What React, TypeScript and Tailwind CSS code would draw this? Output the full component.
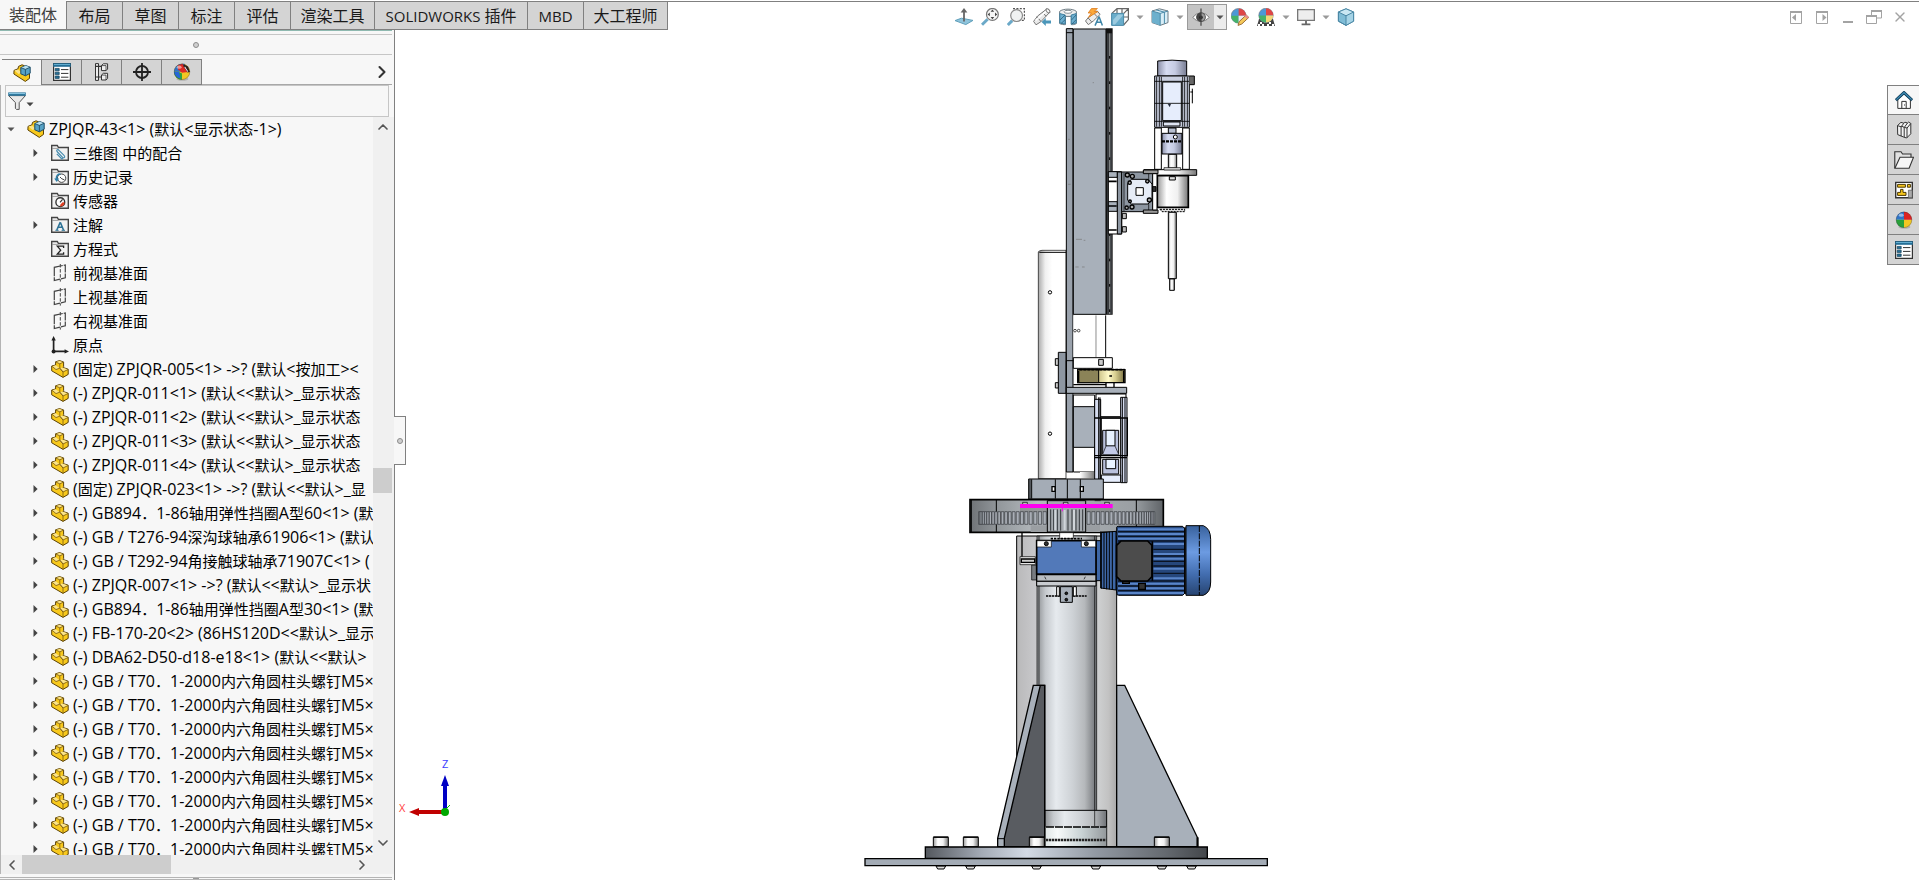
import type { ReactNode } from "react";
import { ChevronDown, ChevronLeft, ChevronRight, ChevronUp, X } from "lucide-react";

/* ---------- shared text helper: Latin runs are set slightly larger than Han runs ---------- */

function MixedText({ text, latin }: { text: string; latin: string }) {
  return (
    <>
      {text.split(/([\u3000-\u9fff\uff00-\uffef]+)/).map((run, i) =>
        i % 2 === 0 && run ? (
          <span key={i} className={latin}>
            {run}
          </span>
        ) : (
          run
        ),
      )}
    </>
  );
}

/* ---------- icons ---------- */

function Icon({ size = 18, children }: { size?: number; children: ReactNode }) {
  return (
    <svg width={size} height={size} viewBox="0 0 18 18" fill="none" className="shrink-0" aria-hidden="true">
      {children}
    </svg>
  );
}

function PartIcon() {
  return (
    <Icon>
      <path d="M4.6 1.8 8.6.6l4 1.4v4.6l-.8.8 5.4 1.8v5.2l-5.2 3L.7 10.8V6L4.6 5z" fill="#f8c91c" stroke="#5c4308" strokeLinejoin="round" />
      <path d="m4.8 2.1 4 1.6 3.6-1.5L8.6.9zM1 6.3 4.8 5.3l3.7 2.9-3.6 1.3zM8.2 8.6l3.2-1 5.4 1.8-4.8 2.4z" fill="#fbe48a" />
      <path d="M8.8 3.8v4.4l3.2 3.8v5.2M4.7 2l4.1 1.8 3.8-1.7M8.8 8.2 12 12l5-2.5M1 6.2l4 3.4 3.6-1.4" stroke="#7a5a10" strokeWidth=".8" />
    </Icon>
  );
}

function AssemblyIcon() {
  return (
    <Icon>
      <path d="M1 6.4 5 4.8 5.5 2.4 9 .8l2.5 1v6l5 2v4.6l-4.2 3L.9 10z" fill="#f8c91c" stroke="#5c4308" strokeLinejoin="round" />
      <path d="M1.5 6.6 5 5.6l4 3-3.4 1.4z" fill="#fbe48a" />
      <path d="m7.8 3.6 5-2 4.4 1.6v6l-4.8 2.6-4.6-2z" fill="#58a3c6" stroke="#1f4e68" strokeLinejoin="round" />
      <path d="m8 3.7 4.8-1.9 4.2 1.5-4.6 2z" fill="#b9e0f0" />
      <path d="m7.8 3.6 4.6 1.8 4.8-2.2m-4.8 2.2v6.2" stroke="#1f4e68" strokeWidth=".9" />
    </Icon>
  );
}

function FolderIcon({ children }: { children: ReactNode }) {
  return (
    <Icon>
      <path d="M.7 16.3V1.5h5.6l1.2 2h9.8v12.8z" fill="#f1f1f1" stroke="#444" strokeWidth="1.4" />
      <path d="M1 4.4h6.4" stroke="#888" strokeWidth=".8" />
      {children}
    </Icon>
  );
}

const icons = {
  assembly: <AssemblyIcon />,
  part: <PartIcon />,
  mates: (
    <FolderIcon>
      <path d="m6 7.5 5.6 5.8M8 6.3l5.5 5.6M5.8 9.8l4.6 4.7M6 7.5c-1-1.6 1-2.5 2-1.2m3.6 7c1 1.2-.4 2-1.2 1.2m3.1-2.6c.7 1.3-.4 2.2-1.4 1.8" stroke="#4189ad" strokeWidth="1.1" />
    </FolderIcon>
  ),
  history: (
    <FolderIcon>
      <circle cx="10.6" cy="10.2" r="4.2" stroke="#444" fill="#fff" />
      <path d="m9 9 1.8 1.8 2.6 1" stroke="#444" />
      <path d="M3.2 10.5h5L5.7 14z" fill="#2f7fa8" />
      <path d="M5.4 11c0-3 1.6-5 4-5" stroke="#2f7fa8" strokeWidth="1.7" />
    </FolderIcon>
  ),
  sensors: (
    <FolderIcon>
      <circle cx="9.3" cy="10.2" r="4.4" stroke="#333" strokeWidth="1.4" fill="#fff" />
      <path d="m9 10.4 2.6-3" stroke="#333" strokeWidth="1.2" />
      <path d="M9.2 14.5a4.4 4.4 0 0 0 4.4-4l-2-.2-2.4 2.4z" fill="#e23f22" />
    </FolderIcon>
  ),
  notes: (
    <FolderIcon>
      <path d="M9.3 6.2 5.8 14M9.3 6.2l3.2 7.8M7 11.3h4.2" stroke="#2e7396" strokeWidth="1.6" />
      <path d="M4.4 14.3h3.2M10.6 14.3H14" stroke="#2e7396" />
    </FolderIcon>
  ),
  equations: (
    <FolderIcon>
      <path d="M12.6 8V6.2H6.3l3.4 4-3.4 4h6.3v-2" stroke="#222" strokeWidth="1.3" />
    </FolderIcon>
  ),
  plane: (
    <Icon>
      <path d="M3.3 3.3v13.2l11-2.6V1z" stroke="#444" strokeWidth="1.2" strokeDasharray="9 1" />
      <path d="M9.3 0v17.6" stroke="#444" strokeDasharray="3.5 1.6" />
    </Icon>
  ),
  origin: (
    <Icon>
      <path d="M2.6 3v12.4H15" stroke="#222" strokeWidth="1.7" />
      <path d="M2.6 0 .4 4.6h4.4zM18 15.4l-4.4-2.2v4.4z" fill="#222" />
      <circle cx="2.6" cy="15.4" r="2" fill="#222" />
    </Icon>
  ),
};

type IconName = keyof typeof icons;

function PropertiesIcon() {
  return (
    <Icon>
      <path d="M.6.6h16.8v16.8H.6z" fill="#fff" stroke="#333" strokeWidth="1.2" />
      <path d="M.2.2h17.6v3.6H.2z" fill="#256f96" />
      <path d="M1 1h16v1H1z" fill="#63add0" />
      <path d="M2.2 5.4h4v2.4h-4zM2.2 9.2h4v2.4h-4zM2.2 13h4v2.4h-4z" fill="#256f96" stroke="#123f58" strokeWidth=".7" />
      <path d="M8 6.6h7.4M8 10.4h7.4M8 14.2h7.4" stroke="#333" />
    </Icon>
  );
}

function ConfigIcon() {
  return (
    <Icon>
      <path d="M2.5.6h3v16.8h-3z" fill="#eee" stroke="#333" />
      <path d="M2.5 3.4h6M2.5 14h6" stroke="#333" strokeWidth="1.1" />
      <path d="M8.5 2.5 10.4.8h4.2v5.2L13 7.6H8.5z" fill="#eee" stroke="#333" />
      <path d="m8.5 12 1.9-1.7h4.2v5.2L13 17H8.5z" fill="#eee" stroke="#333" />
      <path d="M8.5 2.6H13v5M8.5 12.1H13V17" stroke="#333" strokeWidth=".8" />
    </Icon>
  );
}

function TargetIcon() {
  return (
    <Icon>
      <circle cx="9" cy="9" r="6" stroke="#222" strokeWidth="1.8" />
      <path d="M9 0v18M0 9h18" stroke="#222" strokeWidth="1.8" />
    </Icon>
  );
}

function BallIcon({ marked = false }: { marked?: boolean }) {
  return (
    <Icon>
      <ellipse cx="9.4" cy="16" rx="6" ry="1.8" fill="#8f8f8f" opacity=".5" />
      {marked ? (
        <>
          <circle cx="9" cy="8.8" r="8" fill="#f2c722" />
          <path d="M1 8.8A8 8 0 0 1 9 .8h2.6l-2 8H1z" fill="#3074c8" />
          <path d="M1 8.8h4.4L9 10.4v6.3A8 8 0 0 1 1 8.8z" fill="#2fa53b" />
          <path d="M1 8.8h5l1.6 6.8A8 8 0 0 1 1 8.8z" fill="#2766d8" />
          <path d="M4.6 2.2 9.4.8l7.4 8-7.8 1L5 6.4z" fill="#dd2b24" />
          <path d="m10.8 1.2 4.2 2.4 2 5.4-2.4.4L10.2 3z" fill="#2a2020" />
          <path d="m12 3.6 3.2 4.8-.8.4-3-4.6z" fill="#fff" />
        </>
      ) : (
        <>
          <path d="M9 .8a8 8 0 0 0-8 8h8z" fill="#3074c8" />
          <path d="M1 8.8a8 8 0 0 0 8 8v-8z" fill="#28a03a" />
          <path d="M9 16.8a8 8 0 0 0 8-8H9z" fill="#f2c722" />
          <path d="M9 .8a8 8 0 0 1 8 8H9z" fill="#dc2222" />
        </>
      )}
      <circle cx="9" cy="8.8" r="7.8" stroke="#333" strokeOpacity=".4" strokeWidth=".8" />
      <ellipse cx="6.2" cy="4.2" rx="2.4" ry="1.6" fill="#fff" opacity=".5" />
    </Icon>
  );
}

function Caret({ className = "" }: { className?: string }) {
  return (
    <svg width="8" height="5" viewBox="0 0 8 5" className={`shrink-0 ${className}`} aria-hidden="true">
      <path d="M.5.5h7L4 4.2z" fill="currentColor" />
    </svg>
  );
}

/* ---------- command tabs ---------- */

const commandTabs = [
  { label: "布局", width: "w-14" },
  { label: "草图", width: "w-14" },
  { label: "标注", width: "w-14" },
  { label: "评估", width: "w-14" },
  { label: "渲染工具", width: "w-21" },
  { label: "SOLIDWORKS 插件", width: "w-[153px]" },
  { label: "MBD", width: "w-14" },
  { label: "大工程师", width: "w-[85px]" },
];

function CommandTabs() {
  return (
    <div role="tablist" aria-label="命令" className="flex h-full shrink-0 text-base leading-7 text-[#1a1a1a]">
      <button role="tab" aria-selected="true" className="w-[66px] border-b border-[#808080] bg-[#f7f7f7] text-[#404040]">
        装配体
      </button>
      {commandTabs.map((tab) => (
        <button
          key={tab.label}
          role="tab"
          aria-selected="false"
          className={`mt-px ${tab.width} border-y border-l border-[#808080] bg-[#d4d4d4] whitespace-nowrap last:border-r`}
        >
          <MixedText text={tab.label} latin="text-[15px]" />
        </button>
      ))}
    </div>
  );
}

/* ---------- heads-up view toolbar ---------- */

const BLUE = "#8fc4dc";
const EDGE = "#6f7c84";

const viewTools: { name: string; art: ReactNode; menu?: boolean; pressed?: boolean }[] = [
  {
    name: "正视于",
    art: (
      <>
        <path d="m0 12.6 6.4-2.4L18 12.4l-7.2 4.2z" fill={BLUE} stroke="#5f9fba" />
        <path d="M9 13.4V3" stroke="#666" strokeWidth="1.8" />
        <path d="M9 0 5.6 4.6h6.8z" fill="#666" />
      </>
    ),
  },
  {
    name: "整屏显示全图",
    art: (
      <>
        <path d="m6.6 11.2-5.6 5.6" stroke="#6ba9c8" strokeWidth="3" />
        <circle cx="11.4" cy="6.4" r="5.9" fill="#f6f6f6" stroke="#777" strokeWidth="1.2" />
        <path d="m11.4 1.6 1.8 2.2H9.6zM11.4 11.2 13.2 9H9.6zM6.6 6.4l2.2-1.8v3.6zM16.2 6.4 14 4.6v3.6z" fill="#444" />
      </>
    ),
  },
  {
    name: "局部放大",
    art: (
      <>
        <path d="M6 .6h11.4v11.8H13" stroke="#555" strokeWidth="1.2" strokeDasharray="2 1.4" />
        <path d="M5.2 12.6.8 17" stroke="#6ba9c8" strokeWidth="3" />
        <circle cx="9.6" cy="7.6" r="5.9" fill="#f0f2f2" stroke="#888" strokeWidth="1.2" />
      </>
    ),
  },
  {
    name: "上一视图",
    art: (
      <>
        <path d="m.6 13.4 2.4 3.4 4.8-3 8.8-9.4L14 .8 4.6 8z" fill="#e9e9e9" stroke="#777" />
        <path d="m4 8.6 4 5M9.6 4.6l3.4 3.6" stroke="#777" />
        <path d="M2.6 12.4 14 2.6" stroke="#fff" strokeWidth="1.4" />
        <ellipse cx="15" cy="2.8" rx="1.4" ry="2.4" transform="rotate(-40 15 2.8)" fill="#fff" stroke="#777" />
        <path d="m8.6 14 4.2-4v2.5H18v3h-5.2V18z" fill="#4b96b9" />
      </>
    ),
  },
  {
    name: "剖面视图",
    art: (
      <>
        <path d="M.6 3.4C4 .4 14 .4 17.4 3.4v12.2c-2 1-3.6 1.2-5 1V8.4H6.5v8.2c-1.5.2-4-.1-5.9-1z" fill="#eee" stroke={EDGE} />
        <path d="M.8 5.6 6.2 7v9L.8 15zM12.2 7l5-1.4V15l-5 1.2z" fill="#6dafd0" stroke="#3f7f9f" />
        <path d="m1 12 5-5M2 15.6l4.2-4M12.5 12l4.5-5M13 16l4-4.2" stroke="#285f7b" strokeWidth=".8" />
        <ellipse cx="9" cy="3.8" rx="4" ry="1.5" fill="#fff" stroke={EDGE} strokeWidth=".8" />
      </>
    ),
  },
  {
    name: "动态注解视图",
    art: (
      <>
        <path d="m.5 13 2.8 3.6 5-3.6 6.8-6.6-3-3.6-9 7z" fill="#ededed" stroke="#777" />
        <path d="m3 9.8 3.6 4M9 5.4l3.2 3.4" stroke="#777" />
        <path d="m6.4.6 6-.2-3.2 3.2h3.6L3.4 9.4l3-4.4H3.2z" fill="#fca93b" stroke="#dc7a1c" strokeWidth=".8" />
        <path d="m14 8.6-4 9M14 8.6l3.4 9M11.6 14.2h4.6" stroke="#3f86a8" strokeWidth="1.5" />
      </>
    ),
  },
  {
    name: "视图定向",
    menu: true,
    art: (
      <>
        <path d="M.6 5.6 6 .6h11.4v11L12.6 17M6 .6v5M11 .6v5M12.6 5.6l4.8-5M12.6 9h5" stroke="#666" strokeWidth="1.2" />
        <path d="M.6 5.4h12v12H.6z" fill="#69acca" stroke="#4b8aa8" />
        <path d="m2 12 5-5.6h4.6v1.4L4 16.4H2z" fill="#b3d8e8" opacity=".7" />
      </>
    ),
  },
  {
    name: "显示样式",
    menu: true,
    art: (
      <>
        <path d="M1 3 8.4.8 17 3v11.6l-7.8 2.8L1 14.6z" fill="#d9eef7" stroke={EDGE} />
        <path d="m1 3 8.2 2.4v12L1 14.6z" fill="#6db0cd" />
        <path d="m1 3 8.2 2.4L17 3M9.2 5.4v12M5 1.8l8.4 2.4v11.6" stroke="#4c8ba9" />
      </>
    ),
  },
  {
    name: "隐藏/显示项目",
    menu: true,
    pressed: true,
    art: (
      <>
        <path d="M1 9.4C4.6 3.6 13.6 3.6 17 9.4c-3.6 5.2-12.6 5.2-16 0z" fill="#fff" stroke="#777" />
        <circle cx="9" cy="9.2" r="4.4" fill="#9a9a9a" stroke="#555" />
        <path d="M9 4.8a4.4 4.4 0 0 0 0 8.8z" fill="#444" />
        <circle cx="9" cy="9.4" r="1.8" fill="#222" />
        <path d="M9 .4v17.4" stroke="#444" strokeWidth="1.2" />
      </>
    ),
  },
  {
    name: "编辑外观",
    art: (
      <>
        <circle cx="7.6" cy="7.8" r="7.4" fill="#4c98d6" stroke="#777" strokeWidth=".6" />
        <path d="M7.6.4A7.4 7.4 0 0 1 15 7.8H7.6z" fill="#df4646" />
        <path d="M7.6 15.2A7.4 7.4 0 0 1 .2 7.8h7.4z" fill="#45b26a" />
        <path d="M7.6 15.2A7.4 7.4 0 0 0 15 7.8H7.6z" fill="#eee" />
        <path d="m7 17.4 1.2-3.8 7-6.6 2.6 2.4-7 6.6z" fill="#f5c95a" stroke="#9c6f3a" />
        <path d="m13.4 8.4 2.6 2.4 1.8-1.6-2.6-2.4z" fill="#e98d8d" />
      </>
    ),
  },
  {
    name: "应用布景",
    menu: true,
    art: (
      <>
        <path d="M2 11h14l2 7H0z" fill="#444" />
        <path d="M3 14h2v2H3zM7 12.5h2v2H7zM12 14h2v2h-2zM5 16h2v2H5zM10 16h2v2h-2zM15 16h2v2h-2zM1 16h2v2H1z" fill="#fff" />
        <circle cx="9" cy="7.4" r="7.2" fill="#4c98d6" stroke="#777" strokeWidth=".6" />
        <path d="M9 .2a7.2 7.2 0 0 1 7.2 7.2H9z" fill="#df4646" />
        <path d="M9 14.6a7.2 7.2 0 0 1-7.2-7.2H9z" fill="#45b26a" />
        <path d="M9 14.6a7.2 7.2 0 0 0 7.2-7.2H9z" fill="#f4d978" />
      </>
    ),
  },
  {
    name: "视图设置",
    menu: true,
    art: (
      <>
        <path d="M.6 1.6h16.8v10.8H.6z" fill="#eee" stroke="#777" strokeWidth="1.4" />
        <path d="M9 13v3M4.6 16.4h8.8" stroke="#666" strokeWidth="1.8" />
      </>
    ),
  },
  {
    name: "三维视图",
    art: (
      <>
        <path d="M9 .8 16.6 4v9.2L9 17.4l-7.6-4.2V4z" fill="#7fbcd6" stroke="#4b88a5" />
        <path d="M9 .8 16.6 4 9 7.8 1.4 4z" fill="#c9e7f3" />
        <path d="M9 7.8 16.6 4v9.2L9 17.4z" fill="#a5d3e6" />
        <path d="M1.4 4 9 7.8 16.6 4M9 7.8v9.6M9 .8 16.6 4v9.2L9 17.4l-7.6-4.2V4z" stroke="#4b88a5" />
      </>
    ),
  },
];

function ViewToolbar() {
  return (
    <div role="toolbar" aria-label="视图" className="flex h-[26px] shrink-0 items-center gap-1.5 self-center">
      {viewTools.map((tool) =>
        tool.pressed ? (
          <div key={tool.name} className="-mx-[3px] flex h-full border border-[#9a9a9a] bg-[#c4c4c4]">
            <button aria-label={tool.name} aria-pressed="true" className="flex w-[26px] items-center justify-center">
              <Icon>{tool.art}</Icon>
            </button>
            <button aria-label={`${tool.name}菜单`} className="flex w-3 items-center justify-center bg-[#ececec] text-[#555]">
              <Caret />
            </button>
          </div>
        ) : (
          <div key={tool.name} className="flex items-center gap-1.5">
            <button aria-label={tool.name} className="flex w-5 justify-center">
              <Icon>{tool.art}</Icon>
            </button>
            {tool.menu && (
              <button aria-label={`${tool.name}菜单`} className="text-[#999]">
                <Caret />
              </button>
            )}
          </div>
        ),
      )}
    </div>
  );
}

const windowControls: { name: string; art: ReactNode }[] = [
  {
    name: "收起左侧",
    art: (
      <Icon>
        <path d="M3.5 3.5h11v12h-11z" stroke="#a3a3a3" />
        <path d="M3 4h12" stroke="#a3a3a3" strokeWidth="2" />
        <path d="M9 6v7L5 9.5z" fill="#a3a3a3" />
      </Icon>
    ),
  },
  {
    name: "收起右侧",
    art: (
      <Icon>
        <path d="M3.5 3.5h11v12h-11z" stroke="#a3a3a3" />
        <path d="M3 4h12" stroke="#a3a3a3" strokeWidth="2" />
        <path d="M9.5 6v7l4-3.5z" fill="#a3a3a3" />
      </Icon>
    ),
  },
  {
    name: "最小化",
    art: (
      <Icon>
        <path d="M4 14h10" stroke="#a3a3a3" strokeWidth="2" />
      </Icon>
    ),
  },
  {
    name: "还原",
    art: (
      <Icon>
        <path d="M6.5 7V2.5h10V10H12M1.5 7.5h10v8h-10z" stroke="#a3a3a3" />
        <path d="M6 3h11M1 8h11" stroke="#a3a3a3" strokeWidth="2" />
      </Icon>
    ),
  },
  { name: "关闭", art: <X size={16} strokeWidth={2} color="#a3a3a3" /> },
];

/* ---------- feature manager ---------- */

type TreeRow = { text: string; icon: IconName; expandable?: boolean };

const plainParts = [
  "(固定) ZPJQR-005<1> ->? (默认<按加工><",
  "(-) ZPJQR-011<1> (默认<<默认>_显示状态",
  "(-) ZPJQR-011<2> (默认<<默认>_显示状态",
  "(-) ZPJQR-011<3> (默认<<默认>_显示状态",
  "(-) ZPJQR-011<4> (默认<<默认>_显示状态",
  "(固定) ZPJQR-023<1> ->? (默认<<默认>_显",
  "(-) GB894．1-86轴用弹性挡圈A型60<1> (默",
  "(-) GB / T276-94深沟球轴承61906<1> (默认",
  "(-) GB / T292-94角接触球轴承71907C<1> (",
  "(-) ZPJQR-007<1> ->? (默认<<默认>_显示状",
  "(-) GB894．1-86轴用弹性挡圈A型30<1> (默",
  "(-) FB-170-20<2> (86HS120D<<默认>_显示",
  "(-) DBA62-D50-d18-e18<1> (默认<<默认>",
];

const screws = Array.from({ length: 8 }, () => "(-) GB / T70．1-2000内六角圆柱头螺钉M5×");

const treeRows: TreeRow[] = [
  { text: "三维图 中的配合", icon: "mates", expandable: true },
  { text: "历史记录", icon: "history", expandable: true },
  { text: "传感器", icon: "sensors" },
  { text: "注解", icon: "notes", expandable: true },
  { text: "方程式", icon: "equations" },
  { text: "前视基准面", icon: "plane" },
  { text: "上视基准面", icon: "plane" },
  { text: "右视基准面", icon: "plane" },
  { text: "原点", icon: "origin" },
  ...[...plainParts, ...screws].map((text): TreeRow => ({ text, icon: "part", expandable: true })),
];

function Tree() {
  return (
    <ul role="tree" aria-label="特征树" className="min-w-0 flex-1 overflow-hidden text-[15px] leading-6 whitespace-nowrap text-black">
      <li role="treeitem" aria-expanded="true">
        <div className="flex h-6 items-center gap-1 pl-1.5">
          <button aria-label="折叠" className="mr-2 text-[#555]">
            <Caret />
          </button>
          {icons.assembly}
          <span>
            <MixedText text="ZPJQR-43<1> (默认<显示状态-1>)" latin="text-base leading-6" />
          </span>
        </div>
        <ul role="group">
          {treeRows.map((row, i) => (
            <li key={i} role="treeitem" className="flex h-6 items-center pl-8">
              <span className="flex w-[18px] shrink-0">
                {row.expandable && (
                  <button aria-label="展开">
                    <svg width="5" height="8" viewBox="0 0 5 8" aria-hidden="true">
                      <path d="M.5 0v8L4.6 4z" fill="#444" />
                    </svg>
                  </button>
                )}
              </span>
              {icons[row.icon]}
              <span className="pl-1">
                <MixedText text={row.text} latin="text-base leading-6" />
              </span>
            </li>
          ))}
        </ul>
      </li>
    </ul>
  );
}

const managerTabs: { name: string; art: ReactNode }[] = [
  { name: "属性", art: <PropertiesIcon /> },
  { name: "配置", art: <ConfigIcon /> },
  { name: "尺寸专家", art: <TargetIcon /> },
  { name: "外观管理", art: <BallIcon marked /> },
];

function GripDot() {
  return <span className="size-1.5 rounded-full border border-[#8c8c8c] bg-[#cfcfcf]" />;
}

function FeatureManager() {
  return (
    <aside className="flex w-[395px] shrink-0 flex-col border-r border-[#808080] bg-[#f7f7f7]">
      <div className="mr-0.5 h-[5px] shrink-0 border-t border-b border-t-[#8fb9b0] border-b-[#c6c6c6]" />
      <div className="mr-0.5 flex h-5 shrink-0 items-center justify-center border-b border-[#c6c6c6]">
        <GripDot />
      </div>
      <div className="mt-1 mr-0.5 flex h-[26px] shrink-0 pl-0.5">
        <div role="tablist" aria-label="管理器" className="flex">
          <button role="tab" aria-selected="true" aria-label="特征管理器" className="flex w-[39px] items-center justify-center border-t border-[#808080]">
            <AssemblyIcon />
          </button>
          {managerTabs.map((tab) => (
            <button
              key={tab.name}
              role="tab"
              aria-selected="false"
              aria-label={tab.name}
              className="flex w-10 items-center justify-center border-y border-l border-[#808080] bg-[#d4d4d4] last:w-[41px] last:border-r"
            >
              {tab.art}
            </button>
          ))}
        </div>
        <div className="flex flex-1 items-center justify-end border-b border-[#a8a8a8]">
          <button aria-label="更多" className="text-[#333]">
            <ChevronRight size={20} strokeWidth={2.5} />
          </button>
        </div>
      </div>
      <div className="flex min-h-0 flex-1 flex-col border-l border-[#b4b4b4]">
        <div className="mr-[5px] ml-1 flex h-8 shrink-0 items-center border border-[#c6c6c6] pl-0.5">
          <button aria-label="过滤器" className="flex shrink-0 items-center">
            <Icon>
              <path d="M.6 3.6h16.8l-6.2 7v6.8H8.4l-1-1v-5.8z" fill="#e9e9e9" stroke="#555" />
              <path d="M.2.4h17.6v3.4H.2z" fill="#2f789e" />
              <path d="M1 1h16v1H1z" fill="#86c3df" />
            </Icon>
            <Caret className="mt-1.5 text-[#444]" />
          </button>
          <input type="text" aria-label="过滤" className="ml-1 h-6 min-w-0 flex-1 bg-transparent text-sm outline-none" />
        </div>
        <div className="flex min-h-0 flex-1">
          <Tree />
          <div className="flex w-[21px] shrink-0 flex-col bg-[#f0f0f0] pr-0.5">
            <div className="flex h-5 items-center justify-center">
              <ChevronUp size={16} strokeWidth={2.5} color="#555" />
            </div>
            <div className="grow-[332]" />
            <div className="h-[25px] bg-[#cdcdcd]" />
            <div className="grow-[340]" />
            <div className="flex h-6 items-center justify-center">
              <ChevronDown size={16} strokeWidth={2.5} color="#555" />
            </div>
          </div>
        </div>
        <div className="flex h-[19px] shrink-0 items-center bg-[#f0f0f0]">
          <div className="flex w-[21px] justify-center">
            <ChevronLeft size={16} strokeWidth={2.5} color="#555" />
          </div>
          <div className="h-full w-[149px] bg-[#cdcdcd]" />
          <div className="flex flex-1 justify-end pr-6">
            <ChevronRight size={16} strokeWidth={2.5} color="#555" />
          </div>
        </div>
      </div>
      <div className="mt-[3px] mr-0.5 flex h-[3px] shrink-0 justify-center border-y border-[#b4b4b4]">
        <span className="w-1.5 bg-[#999]" />
      </div>
    </aside>
  );
}

/* ---------- task pane ---------- */

const taskTabs: { name: string; art: ReactNode }[] = [
  {
    name: "主页",
    art: (
      <Icon>
        <path d="M2.8 8.6V17.4h12.6V8.6L9 2.8z" fill="#fff" stroke="#333" />
        <path d="M6.8 17.4v-7h4.4v7M9 14h1" stroke="#333" />
        <path d="m.8 9.2 8.2-7.6 8.2 7.6" stroke="#14425e" strokeWidth="3" />
        <path d="m1.4 8.6 7.6-7 7.6 7" stroke="#3f8fb8" strokeWidth="1.2" />
      </Icon>
    ),
  },
  {
    name: "设计库",
    art: (
      <Icon>
        <path d="m2.5 4.6 3.4-3.2 3 .8 1-1 2.6.8 1-.9 2.3 1.3v10.4L11.6 17l-3-1-5.9-2.4z" fill="#f2f2f2" stroke="#333" />
        <path d="m2.5 4.6 3.6 1.2 2.8-3.6M6.1 5.8v9.4M6.1 5.8l.6-.6 2.6 1.2 3.2-4.4M9.2 6.4v9.8M9.3 6.4l2.8.6 3.6-4.4M12 7v9.6" stroke="#333" />
      </Icon>
    ),
  },
  {
    name: "文件探索器",
    art: (
      <Icon size={20}>
        <path d="M.7 16.2V1.6h5.6l1.4 2h7.6v3" fill="#e2e2e2" stroke="#333" />
        <path d="M.8 16.4 5.4 6.5h12.2l-4 9.9z" fill="#f6f6f6" stroke="#333" />
      </Icon>
    ),
  },
  {
    name: "视图调色板",
    art: (
      <Icon>
        <path d="M.7 1.4h16.6v15.4H.7z" fill="#fff" stroke="#333" strokeWidth="1.4" />
        <path d="M2.6 3.4h7.8v2.8H2.6zM12.4 3.4h3v2.8h-3zM5.6 8.4H8v3h3v3H2.6v-3h3z" fill="#f5c51c" stroke="#4d3a05" />
        <path d="M13.4 9.2h3.9v7.6h-3.9z" fill="#aaa" stroke="#555" strokeWidth=".7" />
      </Icon>
    ),
  },
  { name: "外观、布景和贴图", art: <BallIcon /> },
  { name: "自定义属性", art: <PropertiesIcon /> },
];

function TaskPane() {
  return (
    <div role="tablist" aria-label="任务窗格" className="absolute top-[55px] right-0 flex w-8 flex-col border-t border-l border-[#808080]">
      {taskTabs.map((tab, i) => (
        <button
          key={tab.name}
          role="tab"
          aria-selected={i === 0}
          aria-label={tab.name}
          className="flex h-[30px] items-center justify-center border-b border-[#808080] bg-[#d4d4d4] first:h-[29px] first:bg-[#f7f7f7]"
        >
          {tab.art}
        </button>
      ))}
    </div>
  );
}

/* ---------- 3D model ---------- */

function Gradient({ id, stops }: { id: string; stops: [number, string][] }) {
  return (
    <linearGradient id={id}>
      {stops.map(([offset, color]) => (
        <stop key={offset} offset={offset} stopColor={color} />
      ))}
    </linearGradient>
  );
}

/* teeth left and right of the pinion; spacing tightens towards the rim */
const gearTeeth = Array.from({ length: 50 }, (_, i) => {
  const angle = -1.35 + (i / 49) * 2.7;
  return { x: 380 + (262 * Math.sin(angle)) / Math.sin(1.35), width: 3 + 7 * Math.cos(angle) };
}).filter(({ x }) => x < 316 || x > 440);

const boltHeads = [250, 340, 538, 913];
const boltTails = [258, 347, 545, 723, 921, 1010];

function Pedestal() {
  return (
    <g transform="translate(850 620) scale(0.33333)" stroke="#000" strokeWidth="3">
      <path d="M500-252H800V680H500z" fill="url(#back)" />
      <path d="M561-252H740V680H561z" fill="url(#tube)" strokeWidth="2" />
      <path d="M567-252V196M734-252V620" strokeWidth="2" />
      <path d="M584 571H770V680H584z" fill="url(#tube)" />
      <path d="M734 571V618" strokeWidth="2" />
      <path d="M586 621H769V678H586z" fill="url(#ring)" stroke="none" />
      <path d="M588 621H769" strokeWidth="5" strokeDasharray="24 3" />
      <path d="M588 660H769" strokeWidth="8" strokeDasharray="7 2" stroke="#222" />
      <path d="M800 196H824L1042 652V680H800z" fill="#a8b0ba" strokeWidth="4" />
      <path d="M1043 652V682" strokeWidth="6" />
      <path d="M550 196H584V680H443V655z" fill="#a8b0ba" strokeWidth="4" />
      <path d="M571 196H584V680H463V655z" fill="#595c61" strokeWidth="4" />
      <path d="M443 656H463" />
      {boltHeads.map((x) => (
        <g key={x}>
          <path d={`M${x} 652H${x + 45}V680H${x}z`} fill="url(#bolt)" />
          <path d={`M${x} 651H${x + 45}`} strokeWidth="4" />
        </g>
      ))}
      <path d="M226 681H1072V715H226z" fill="url(#base)" strokeWidth="4" />
      {boltTails.map((x) => (
        <path key={x} d={`M${x} 738H${x + 29}L${x + 24} 747H${x + 5}z`} fill="#ddd" />
      ))}
      <path d="M45 716H1252V737H45z" fill="#a3abb5" strokeWidth="4" />
    </g>
  );
}

function UpperArm() {
  return (
    <g transform="translate(1020 20) scale(0.33333)" stroke="#000" strokeWidth="3">
      <path d="M55 696Q56 692 66 691H138V1376H55z" fill="url(#rear)" strokeWidth="2" />
      <path d="M58 697H138" />
      <circle cx="90" cy="817" r="5" fill="#fff" />
      <circle cx="90" cy="1241" r="5" fill="#fff" />
      <path d="M139 26H159V1356H139z" fill="#9aa2ac" />
      <path d="M139 38H159" />
      <path d="M160 27H258V883H160z" fill="#a8b0ba" />
      <path d="M258 25H278V884H258z" fill="#111" stroke="none" />
      <path d="M264 40V882M273 40V882" stroke="#8d949d" strokeWidth="2" />
      <path d="M269 40V882" stroke="#d8dce0" strokeWidth="2" strokeDasharray="68 8" />
      <path d="M168 658h18m5 3h5m-30 80h10m10 0h8M218 188h4M144 358h6m-6 135h8" stroke="#777" strokeWidth="2" />

      <path d="M404 324H424V448H404zM488 324H508V448H488z" fill="#fff" />
      <path d="M413 123Q456 118 500 123V168H413z" fill="url(#silver)" />
      <path d="M404 168H508V322H404z" fill="#c9cfe0" />
      <path d="M428 186H484V302H428z" fill="#e6edfc" />
      <path d="M410 170V320M418 170V320M424 170V320M488 170V320M494 170V320M502 170V320M404 184H508M404 250H508M404 304H508" strokeWidth="2.5" />
      <path d="M430 306H480V318H430z" fill="#dfe5f3" />
      <path d="M508 168h15v26h-15m9 12v44m-6-34h8" fill="#666" />
      <path d="M444 252h8l-3 8z" fill="#26324f" strokeWidth="1" />
      <path d="M445 324H468V340H445z" fill="#b7bfd0" />
      <path d="M426 340H486V402H426z" fill="url(#silver)" />
      <path d="M426 364H486" strokeWidth="7" strokeDasharray="9 3" />
      <circle cx="466" cy="351" r="6" fill="#fff" />
      <path d="M445 403H470V444H445z" fill="url(#bolt)" />
      <path d="M372 449H530V466H372z" fill="url(#bolt)" />
      <path d="M432 443H482V450H432z" fill="#ddd" strokeWidth="2" />
      <path d="M412 467H505V562H412z" fill="url(#bolt)" strokeWidth="5" />
      <path d="M448 470h18v10h-18z" fill="#ddd" />
      <path d="M420 568H494V575H426z" fill="#ddd" strokeDasharray="6 3" />
      <path d="M445 577H469V776H445z" fill="url(#bolt)" />
      <path d="M449 777H463V811H449z" fill="url(#bolt)" />

      <path d="M265 455H305V642H265z" fill="#fff" />
      <path d="M265 455H292V472H265zM265 545H292V574H265z" fill="#aab2bc" />
      <path d="M265 484H290M265 558H290M265 630H290" strokeWidth="5" />
      <path d="M292 456H305V642H292z" fill="#8d96a1" />
      <path d="M307 580h12v16h-12zM307 620h12v16h-12z" fill="#bbb" />
      <path d="M305 456H398V575H305z" fill="#8d96a1" />
      <path d="M312 458V574M386 458V574" strokeWidth="2" />
      <path d="M334 478H384L396 492V540L384 552H334L323 541V490z" fill="#e6ecf6" />
      <path d="M348 503H370V526H348z" fill="#fff" />
      <g fill="#aaa" strokeWidth="4">
        <circle cx="322" cy="465" r="6" />
        <circle cx="337" cy="469" r="6" />
        <circle cx="329" cy="488" r="5" />
        <circle cx="382" cy="484" r="5" />
        <circle cx="388" cy="540" r="6" />
        <circle cx="336" cy="561" r="6" />
        <circle cx="320" cy="563" r="5" />
        <circle cx="330" cy="544" r="4" />
      </g>
      <path d="M370 450H414V461H370zM370 570H414V580H370z" fill="#999" />
      <path d="M398 461H411V570H398z" fill="#fff" />
      <path d="M398 500h10v14h-10z" fill="#333" />
    </g>
  );
}

function LowerCarriage() {
  return (
    <g transform="translate(1020 300) scale(0.33333)" stroke="#000" strokeWidth="3">
      <path d="M160 46H257V172H160z" fill="#fff" stroke="none" />
      <path d="M228 46V172" strokeWidth="2" stroke="#555" />
      <path d="M257 46V172" />
      <circle cx="165" cy="92" r="4" fill="#fff" strokeWidth="2" />
      <circle cx="176" cy="92" r="4" fill="#fff" strokeWidth="2" />
      <path d="M160 173H277V205H160z" fill="#fff" />
      <path d="M236 178h14v18h-14z" fill="#ccc" />
      <path d="M173 209H315V248H173z" fill="url(#gold)" strokeWidth="4" />
      <path d="M173 209H236V248H173z" fill="#8b8358" />
      <path d="M178 209H314" strokeWidth="5" strokeDasharray="9 3" />
      <path d="M268 228h8M176 212V246M311 212V246M258 248v14m24-14v14M160 254H258" strokeWidth="4" />
      <path d="M106 176h10v20h-10zM106 248h10v16h-10z" fill="#ccc" />
      <path d="M115 157H138V280H115z" fill="#8d96a1" />
      <path d="M139 182V280M139 182H160" />
      <path d="M139 262H320V280H139z" fill="#a8b0ba" />
      <path d="M160 285H224V516H160z" fill="#fff" />
      <path d="M160 320H224V442H160z" fill="#a8b0ba" />
      <path d="M180 516H224V535H180z" fill="url(#shade)" stroke="none" />
      <path d="M228 282H318V350H228z" fill="#fff" />
      <path d="M224 298H242V548H224zM302 292H321V548H302z" fill="#d5dcf0" />
      <path d="M236 292V548M240 292V548M307 292V548M315 292V548" strokeWidth="3" />
      <path d="M244 354H302V466H244z" fill="#fff" />
      <path d="M248 391H296V463H248z" fill="#b9c1dc" />
      <path d="M258 391H285V438H258z" fill="#e8f2ff" />
      <path d="M248 463 258 438H285L296 463" fill="#c3cae6" strokeWidth="2" />
      <path d="M224 354H322V467H224" fill="none" strokeWidth="4" />
      <path d="M224 473H321" strokeWidth="4" />
      <path d="M248 478H296V522H248z" fill="#b9c1dc" />
      <path d="M258 478H287V506H258z" fill="#e8f2ff" />
      <path d="M244 525H302V547H244z" fill="#e6edfc" />
      <path d="M26 537H250V597H26z" fill="#a4acb6" />
      <path d="M30 538V596M35 538V596M106 538V596M142 538V596M181 538V596" strokeWidth="3" />
      <path d="M96 560h9v14h-9zM181 560h9v14h-9z" fill="#fff" strokeWidth="4" />
    </g>
  );
}

function TurntableAndDrive() {
  return (
    <g transform="translate(940 470) scale(0.33333)" stroke="#000" strokeWidth="3">
      <path d="M246 188V262" strokeWidth="4" />
      <path d="M275 285H290V330H275z" fill="#777b80" strokeWidth="2" />
      <path d="M240 260H286V284H240z" fill="#e6e6e6" strokeWidth="2" />
      <path d="M244 267H284V277H244z" fill="#ccc" strokeWidth="4" />
      <path d="M90 89H670V187H90z" fill="url(#disc)" strokeWidth="5" />
      <path d="M169 90V186M589 90V186M94 90V186" />
      <path d="M240 114H518V126H240z" fill="#777" stroke="none" opacity=".5" />
      <path d="M272 166H480V186H272z" fill="#9a9ea2" stroke="none" />
      {gearTeeth.map(({ x, width }) => (
        <path key={x} d={`M${x - width / 2} 125h${width}v38h${-width}z`} fill="#a9aeb6" stroke="#33373b" strokeWidth="2" />
      ))}
      <path d="M322 92H437V186H322z" fill="#a4a9ae" />
      <path d="M332 118V182M341 118V182M352 118V182M362 118V182M384 118V182M396 118V182M408 118V182M418 118V182M428 118V182" strokeWidth="3" stroke="#33373b" />
      <path d="M346 120V180M374 120V180M402 120V180" stroke="#d0d5da" strokeWidth="6" />
      <path d="M248 97h14v9h-14zM370 97h14v9h-14zM494 97h14v9h-14zM464 92h18" fill="#bbb" strokeWidth="2" />
      <path d="M240 108H518" stroke="#ff00f0" strokeWidth="12" />
      <path d="M367 100V124" stroke="#ff00f0" />
      <path d="M359 188H400V206H359z" fill="#fff" strokeWidth="2" />
      <path d="M332 206H426" strokeWidth="5" strokeDasharray="7 3" />

      <path d="M468 212H484V332H468z" fill="#3e67a6" />
      <path d="M482 188 528 184V360L482 354z" fill="#3e67a6" />
      <path d="M484 188V356M492 186V357M500 186V358M508 185V358M517 184V359" />
      <path d="M530 172Q530 169 536 169H728L734 176V370L728 376H536Q530 376 530 370z" fill="#26477c" />
      <path d="M534 178H732M534 192H732M534 206H732M640 222H732M640 252H732M640 266H732M640 296H732M640 325H732M534 341H732M534 355H732M534 369H732" stroke="#5a85c9" strokeWidth="6" />
      <path d="M534 185H732M534 199H732M534 213H732M640 238H732M640 258H732M640 274H732M640 288H732M640 310H732M534 333H732M534 348H732M534 362H732" stroke="#0b1424" strokeWidth="4" />
      <path d="M738 167H790Q812 176 812 208V336Q812 368 790 376H738z" fill="url(#cap)" />
      <path d="M778 168V376" strokeDasharray="18 4" />
      <path d="M735 172V372" strokeWidth="5" />
      <path d="M543 213H623L636 226V320L623 333H543L530 320V226z" fill="#4c4c4c" strokeWidth="5" />
      <path d="M637 214V332" strokeWidth="5" />
      <path d="M596 340h20v18h-20zM548 334h20v6h-20z" fill="#333" strokeWidth="4" />

      <path d="M290 212H468V312H290z" fill="#5279b9" strokeWidth="5" />
      <path d="M291 212H334V231H291zM424 212H467V231H424z" fill="#fff" strokeWidth="2" />
      <circle cx="319" cy="221" r="6" fill="#333" />
      <circle cx="439" cy="221" r="6" fill="#333" />
      <path d="M290 314H468V334H290z" fill="#b9bdc1" strokeWidth="4" />
      <path d="M290 334H468V348H290z" fill="#c9ccd0" />
      <path d="M314 320l4 8m118-8-4 8" strokeWidth="2" />
      <path d="M318 378H440" strokeWidth="5" strokeDasharray="7 2" />
      <path d="M350 350H358V378H350zM400 350H409V378H400z" fill="#fff" />
      <path d="M361 350H397V397H361z" fill="#a8b0ba" />
      <circle cx="379" cy="370" r="4" fill="#222" />
      <circle cx="379" cy="389" r="4" fill="#222" />
    </g>
  );
}

function Triad() {
  return (
    <g className="font-['Open_Sans','Noto_Sans',sans-serif]" fontSize="11">
      <path d="M417 812H444" stroke="#c00000" strokeWidth="4" />
      <path d="M409 812 419 808V816z" fill="#c00000" />
      <path d="M445 811V784" stroke="#0000c4" strokeWidth="4" />
      <path d="M445 775 441 786H449z" fill="#0000c4" />
      <circle cx="445" cy="812" r="4" fill="#00a800" />
      <path d="M446 809 450 805" stroke="#00c800" />
      <text x="399" y="812" fill="#ff4040">
        X
      </text>
      <text x="442" y="768" fill="#4040ff">
        Z
      </text>
    </g>
  );
}

function Model() {
  return (
    <svg viewBox="395 30 1524 850" className="h-full w-full overflow-visible" fill="none" role="img" aria-label="ZPJQR-43">
      <defs>
        <Gradient id="back" stops={[[0, "#b9b9ba"], [0.2, "#c9c9cc"], [0.5, "#d0d2d4"], [0.8, "#d0d2d3"], [0.92, "#c2c2c2"], [1, "#a9a9a9"]]} />
        <Gradient id="tube" stops={[[0, "#8d9093"], [0.14, "#c5c9cd"], [0.32, "#e6eaee"], [0.6, "#cdd1d5"], [0.8, "#b5b8bb"], [1, "#6f7276"]]} />
        <Gradient id="ring" stops={[[0, "#e0e6e6"], [0.2, "#f7fafa"], [0.6, "#c8d2d4"], [1, "#94999c"]]} />
        <Gradient id="bolt" stops={[[0, "#999"], [0.3, "#fff"], [0.65, "#f0f0f0"], [1, "#777"]]} />
        <Gradient id="base" stops={[[0, "#54585e"], [0.2, "#a4abb6"], [0.36, "#d3dae5"], [0.6, "#939aa4"], [0.85, "#656a70"], [1, "#43464a"]]} />
        <Gradient id="rear" stops={[[0, "#aaa"], [0.25, "#f0f0f0"], [0.5, "#fff"], [1, "#fff"]]} />
        <Gradient id="silver" stops={[[0, "#8b90a8"], [0.3, "#d6dcf2"], [0.6, "#c5cbe2"], [1, "#777c92"]]} />
        <Gradient id="gold" stops={[[0, "#8b8358"], [0.45, "#cfc68c"], [0.65, "#fffac8"], [0.8, "#d6cd8f"], [1, "#746b3d"]]} />
        <Gradient id="shade" stops={[[0, "#fff"], [1, "#777"]]} />
        <Gradient id="disc" stops={[[0, "#6f7377"], [0.15, "#93989c"], [0.35, "#b4b9bd"], [0.6, "#a5aaae"], [0.85, "#9a9fa3"], [1, "#5f6367"]]} />
        <linearGradient id="cap" x1="0" y1="0" x2="0" y2="1">
          <stop offset="0" stopColor="#38619c" />
          <stop offset=".38" stopColor="#6c9be2" />
          <stop offset=".7" stopColor="#426daf" />
          <stop offset="1" stopColor="#274471" />
        </linearGradient>
      </defs>
      <Pedestal />
      <UpperArm />
      <LowerCarriage />
      <TurntableAndDrive />
      <Triad />
    </svg>
  );
}

/* ---------- page ---------- */

export default function App() {
  return (
    <div className="flex h-screen flex-col overflow-hidden bg-white font-['Open_Sans','Noto_Sans_CJK_SC',sans-serif]">
      <header className="flex h-[30px] shrink-0">
        <CommandTabs />
        <div className="mt-px flex min-w-0 flex-1 border-t border-[#808080] pt-0.5 pr-1.5">
          <div className="w-[286px]" />
          <ViewToolbar />
          <div className="ml-auto flex">
            {windowControls.map((control) => (
              <button key={control.name} aria-label={control.name} className="flex w-[26px] items-center justify-center">
                {control.art}
              </button>
            ))}
          </div>
        </div>
      </header>
      <div className="flex min-h-0 flex-1">
        <FeatureManager />
        <main className="relative min-w-0 flex-1">
          <Model />
          <button
            aria-label="折叠面板"
            className="absolute top-[386px] -left-px flex h-[49px] w-3 items-center justify-center border border-l-0 border-[#808080] bg-[#f7f7f7]"
          >
            <GripDot />
          </button>
          <TaskPane />
        </main>
      </div>
    </div>
  );
}
